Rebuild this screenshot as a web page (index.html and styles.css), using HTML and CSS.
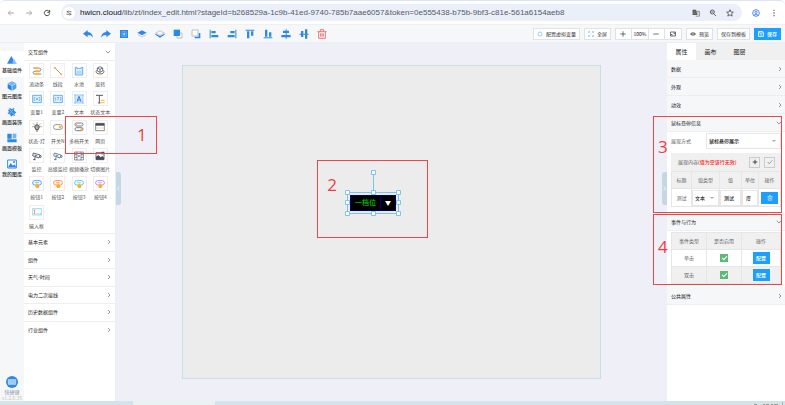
FILE: index.html
```html
<!DOCTYPE html>
<html lang="zh-CN">
<head>
<meta charset="utf-8">
<meta name="viewport" content="width=device-width, initial-scale=1">
<title>组态编辑器</title>
<link rel="stylesheet" href="styles.css">
</head>
<body>
<svg class="defs" aria-hidden="true">
  <symbol id="chev-r" viewBox="0 0 12 18"><path d="M3 3l6 6-6 6" fill="none" stroke="#666" stroke-width="2"/></symbol>
  <symbol id="chev-d" viewBox="0 0 18 12"><path d="M2 2l7 7 7-7" fill="none" stroke="#666" stroke-width="2"/></symbol>
  <symbol id="btn-shape" viewBox="0 0 30 30"><rect x="2" y="5" width="26" height="13" rx="6" fill="none" stroke="currentColor" stroke-width="3"/><path d="M9 11h12" stroke="currentColor" stroke-width="2"/><path d="M13 14q2-3 4 0v3l5 2v4l-3 4h-6l-4-6 2-2 2 2z" fill="#ffad1f"/></symbol>
  <symbol id="camera" viewBox="0 0 30 30"><path d="M4 6l20 6-3 9-19-7zM8 12l8 3M10 17l-3 9M3 26h8M24 13l4 2-3 6" fill="none" stroke="currentColor" stroke-width="2.5"/></symbol>
</svg>

<header class="browser">
  <button class="nav" aria-label="后退"><svg viewBox="0 0 24 24"><path d="M21 12H4M11 5l-7 7 7 7" fill="none" stroke="#999" stroke-width="2.5"/></svg></button>
  <button class="nav" aria-label="前进"><svg viewBox="0 0 24 24"><path d="M3 12h17M13 5l7 7-7 7" fill="none" stroke="#999" stroke-width="2.5"/></svg></button>
  <button class="nav" aria-label="刷新"><svg viewBox="0 0 24 24"><path d="M19 8a8 8 0 1 0 1 5M20 3v7h-7" fill="none" stroke="#444" stroke-width="3"/></svg></button>
  <div class="address">
    <span class="site"><svg viewBox="0 0 24 24"><path d="M3 7h5M14 7h8M2 17h9M17 17h5" stroke="#444" stroke-width="3"/><circle cx="9" cy="7" r="3" fill="none" stroke="#444" stroke-width="2.5"/><circle cx="15" cy="17" r="3" fill="none" stroke="#444" stroke-width="2.5"/></svg></span>
    <span class="url"><b>hwicn.cloud</b>/lib/zt/index_edit.html?stageId=b268529a-1c9b-41ed-9740-785b7aae6057&amp;token=0e555438-b75b-9bf3-c81e-561a6154aeb8</span>
    <button class="nav" aria-label="翻译"><svg viewBox="0 0 28 26"><path d="M2 2h12l5 18H2z" fill="#555"/><path d="M14 7h12v17H13" fill="none" stroke="#555" stroke-width="2"/><path d="M12 9a4 4 0 1 0 0 5H9M17 12h7M20 10v2c0 4-1 6-3 8M19 14l5 6" fill="none" stroke="#aaa" stroke-width="1.8"/></svg></button>
    <button class="nav" aria-label="缩放"><svg viewBox="0 0 24 24"><circle cx="10" cy="9" r="6" fill="none" stroke="#444" stroke-width="2.5"/><path d="M7 9h6M14 14l7 7" stroke="#444" stroke-width="2.5"/></svg></button>
    <button class="nav" aria-label="收藏"><svg viewBox="0 0 24 24"><path d="M12 2l3 7 7 .6-5.300 4.700 1.700 7L12 17.500 5.600 21.300l1.700-7L2 9.600 9 9z" fill="none" stroke="#444" stroke-width="2.300"/></svg></button>
  </div>
  <button class="nav" aria-label="账户"><svg viewBox="0 0 24 24"><circle cx="12" cy="12" r="10" fill="none" stroke="#3b78e0" stroke-width="2.500"/><circle cx="12" cy="10" r="3.500" fill="none" stroke="#3b78e0" stroke-width="2.500"/><path d="M5 19q7-6 14 0" fill="none" stroke="#3b78e0" stroke-width="2.500"/></svg></button>
  <button class="nav" aria-label="菜单"><svg viewBox="0 0 24 24"><g fill="#444"><circle cx="12" cy="4" r="2"/><circle cx="12" cy="12" r="2"/><circle cx="12" cy="20" r="2"/></g></svg></button>
</header>

<nav class="toolbar" aria-label="工具栏">
  <div class="tools">
    <button aria-label="撤销"><svg viewBox="0 0 30 30"><path d="M0 14L14 3v6c10 1 15 7 16 17-4-6-8-8-16-8v7z"/></svg></button>
    <button aria-label="重做"><svg viewBox="0 0 30 30"><path d="M30 14L16 3v6C6 10 1 16 0 26c4-6 8-8 16-8v7z"/></svg></button>
    <button aria-label="组合"><svg viewBox="0 0 30 30"><path d="M3 3h24v24H3z"/><path d="M9 8h13v14H9z" fill="none" stroke="#7ab8f6" stroke-width="2"/><path d="M12 15h7M15.500 11v8" fill="none" stroke="#fff" stroke-width="2"/></svg></button>
    <button aria-label="上移"><svg viewBox="0 0 30 30"><path d="M15 4l14 7-14 8L1 11z"/><path d="M2 17l13 7 13-7" fill="none" stroke="#aab4c0" stroke-width="2"/></svg></button>
    <button aria-label="下移"><svg viewBox="0 0 30 30"><path d="M15 5l13 7-13 7-13-7z" fill="none" stroke="#aab4c0" stroke-width="2"/><path d="M1 14l14 7 14-7v3l-14 9-14-9z"/></svg></button>
    <button aria-label="置顶"><svg viewBox="0 0 30 30"><path d="M12 12h15v15H12z" fill="none" stroke="#9aa6b4" stroke-width="2"/><path d="M2 2h19v19H2z"/></svg></button>
    <button aria-label="置底"><svg viewBox="0 0 30 30"><path d="M11 23v5h17V12h-5v11z"/><path d="M3 3h18v18H3z" fill="#fff" stroke="#9aa6b4" stroke-width="2"/></svg></button>
    <button aria-label="左对齐"><svg viewBox="0 0 30 30"><path d="M2 2h3v26H2zM7 6h13v7H7zM7 18h21v7H7z"/></svg></button>
    <button aria-label="右对齐"><svg viewBox="0 0 30 30"><path d="M25 2h3v26h-3zM10 6h13v7H10zM2 18h21v7H2z"/></svg></button>
    <button aria-label="上对齐"><svg viewBox="0 0 30 30"><path d="M2 2h26v3H2zM6 7h7v21H6zM18 7h7v13h-7z"/></svg></button>
    <button aria-label="下对齐"><svg viewBox="0 0 30 30"><path d="M2 25h26v3H2zM6 2h7v21H6zM18 10h7v13h-7z"/></svg></button>
    <button aria-label="水平居中"><svg viewBox="0 0 30 30"><path d="M14 1h3v28h-3zM6 5h18v7H6zM1 18h28v7H1z"/></svg></button>
    <button aria-label="垂直居中"><svg viewBox="0 0 30 30"><path d="M1 14h28v3H1zM6 6h7v18H6zM18 1h7v28h-7z"/></svg></button>
    <button aria-label="删除"><svg viewBox="0 0 30 30"><path d="M1 8h28M10 7V2h10v5M5 9v19h20V9M11 13v10M15 13v10M19 13v10" fill="none" stroke="#ec5b5b" stroke-width="2.500"/></svg></button>
  </div>
  <div class="actions">
    <button class="btn"><svg viewBox="0 0 24 24"><circle cx="12" cy="12" r="8" fill="none" stroke="#9cc8f7" stroke-width="4"/></svg>配置虚拟变量</button>
    <button class="btn"><svg viewBox="0 0 24 24"><path d="M2 8V2h6M16 2h6v6M22 16v6h-6M8 22H2v-6M5 5l4 4M19 5l-4 4M19 19l-4-4M5 19l4-4" fill="none" stroke="#56a9f5" stroke-width="2"/></svg>全屏</button>
    <div class="zoom">
      <button aria-label="放大"><svg viewBox="0 0 24 24"><path d="M1 12h22M12 1v22" stroke="#444" stroke-width="3"/></svg></button>
      <output>100%</output>
      <button aria-label="缩小"><svg viewBox="0 0 24 24"><path d="M1 12h22" stroke="#444" stroke-width="3"/></svg></button>
      <button aria-label="适应画布"><svg viewBox="0 0 24 24"><path d="M2 4h20v16H2zM13 8h5v5M11 16H6v-4" fill="none" stroke="#444" stroke-width="3"/></svg></button>
    </div>
    <button class="btn"><svg viewBox="0 0 24 24"><path d="M0 12Q12-2 24 12 12 26 0 12z" fill="#555"/><circle cx="12" cy="12" r="4" fill="none" stroke="#fff" stroke-width="2"/></svg>预览</button>
    <button class="btn">保存到模板</button>
    <button class="btn primary"><svg viewBox="0 0 24 24"><path d="M2 2h17l3 3v17H2zM7 2v7h10V2M6 16h12" fill="none" stroke="#fff" stroke-width="3"/></svg>保存</button>
  </div>
</nav>

<div class="workspace">
  <nav class="rail" aria-label="素材分类">
    <div class="rail-list">
      <a class="active" href="#"><svg viewBox="0 0 30 30"><path d="M13 3l13 23H0z" fill="#2f88e8"/><path d="M20 10l10 16H16z" fill="#8ec1f7"/></svg>基础组件</a>
      <a href="#"><svg viewBox="0 0 30 30"><path d="M15 1l13 6-13 7L2 7z" fill="#77b5f5"/><path d="M2 8l12 7v14L2 22z" fill="#2583e8"/><path d="M28 8l-12 7v14l12-7z" fill="#4b9ef0"/></svg>图元图库</a>
      <a href="#"><svg viewBox="0 0 30 30"><path d="M7 2l7 4 8-3-1 8 7 5-6 5 2 6-7-2-5 4-3-7-7-2 4-6-4-6h6z" fill="#3388e8"/><path d="M6 5l17 19M20 5L7 22" stroke="#9ccaf9" stroke-width="2"/></svg>画面装饰</a>
      <a href="#"><svg viewBox="0 0 30 30"><path d="M1 2h13v15H1zM1 19h28v9H1z" fill="#2f88e8"/><path d="M17 2h11v14H17z" fill="#73b4f6"/></svg>画面模板</a>
      <a href="#"><svg viewBox="0 0 30 30"><path d="M2 3h26v24H2z" fill="#fff" stroke="#2f88e8" stroke-width="3"/><path d="M3 25l8-13 7 8 4-4 6 9z" fill="#2f88e8"/><circle cx="21" cy="9" r="3" fill="#2f88e8"/></svg>我的图库</a>
    </div>
    <div class="shortcut">
      <button aria-label="快捷键"><svg viewBox="0 0 36 36"><circle cx="18" cy="18" r="18" fill="#2f88e8"/><path d="M7 11h22v14H7z" fill="#8ec1f7" stroke="#fff" stroke-width="1.500"/><path d="M10 15h16M10 19h16M13 22h10" stroke="#fff" stroke-dasharray="2 1"/></svg></button>
      <span>快捷键</span>
      <small>v1.2.6.35</small>
    </div>
  </nav>

  <aside class="library">
    <button class="row head">交互组件<svg class="down"><use href="#chev-d"/></svg></button>
    <div class="grid">
      <button><i><svg viewBox="0 0 30 30"><path d="M3 6h17q7 0 7 5t-7 5H9q-6 0-6 4t6 4h19" fill="none" stroke="#555b6b" stroke-width="2"/><path d="M6 6h13M10 15h13M8 24h15" stroke="#ffb52e" stroke-width="5"/></svg></i>流动条</button>
      <button><i><svg viewBox="0 0 30 30"><path d="M4 4l22 22" stroke="#666" stroke-width="2"/><circle cx="5" cy="5" r="3" fill="#ffb52e"/><circle cx="25" cy="25" r="3" fill="#ffb52e"/></svg></i>线段</button>
      <button><i><svg viewBox="0 0 30 30"><path d="M4 4h4v3h14V4h4v23H4z" fill="#e3f1ff" stroke="#4b9ff2" stroke-width="2.500"/><path d="M7 14h16v10H7z" fill="#b5d8fb"/></svg></i>水池</button>
      <button><i><svg viewBox="0 0 30 30"><path d="M15 2l8 4v9l-8 4-8-4V6zM7 6l8 4 8-4M15 10v9M5 13q-5 5 1 9 9 4 18 0 6-4 1-9" fill="none" stroke="#555b6b" stroke-width="2.500"/><path d="M16 21l6 4-6 3z" fill="#ffb52e"/></svg></i>旋转</button>
      <button><i><svg viewBox="0 0 30 30"><path d="M2 4h26v22H2z" fill="#e3f1ff" stroke="#4b9ff2" stroke-width="2.500"/><path d="M8 9l-2 6 2 6M22 9l2 6-2 6M11 11l8 8M19 11l-8 8" fill="none" stroke="#4b9ff2" stroke-width="2"/></svg></i>变量1</button>
      <button><i><svg viewBox="0 0 30 30"><path d="M2 4h26v22H2z" fill="#e3f1ff" stroke="#4b9ff2" stroke-width="2.500"/><path d="M8 10v10M12 10h6l-4 9M22 9l2 6-2 6" fill="none" stroke="#4b9ff2" stroke-width="2"/></svg></i>变量2</button>
      <button><i><svg viewBox="0 0 30 30"><path d="M3 3h24v24H3z" fill="#d9ebfe" stroke="#7ab8f6" stroke-width="2"/><path d="M1 1h4v4H1zM25 1h4v4h-4zM1 25h4v4H1zM25 25h4v4h-4z" fill="#8ec4f8"/><path d="M9 23l6-16 6 16M11 18h8" fill="none" stroke="#2583e8" stroke-width="3"/></svg></i>文本</button>
      <button><i><svg viewBox="0 0 30 30"><path d="M3 4h21M13 4v23M9 27h7" stroke="#555b6b" stroke-width="3"/><path d="M17 19h12M17 26h12" stroke="#ffb52e" stroke-width="3"/></svg></i>状态文本</button>
      <button><i><svg viewBox="0 0 30 30"><path d="M11 21q-4-4-3-8 2-5 7-5t7 5q1 4-3 8v2h-8zM12 27h6" fill="#8a909a" stroke="#444b58" stroke-width="2.500"/><path d="M15 1v4M4 5l3 3M26 5l-3 3M1 14h4M25 14h4" stroke="#444b58" stroke-width="2"/><path d="M15 13v8" stroke="#ffb52e" stroke-width="4"/></svg></i>状态-灯</button>
      <button><i><svg viewBox="0 0 30 30"><rect x="2" y="8" width="26" height="14" rx="6" fill="#fff" stroke="#777e8a" stroke-width="2.500"/><circle cx="21" cy="15" r="4" fill="#ffb52e"/></svg></i>开关N</button>
      <button><i><svg viewBox="0 0 30 30"><rect x="3" y="3" width="24" height="9" rx="4" fill="none" stroke="#777e8a" stroke-width="3"/><rect x="3" y="17" width="24" height="9" rx="4" fill="none" stroke="#777e8a" stroke-width="3"/><circle cx="7" cy="7" r="3" fill="#ffb52e"/><circle cx="22" cy="21" r="3" fill="#ffb52e"/></svg></i>多档开关</button>
      <button><i><svg viewBox="0 0 30 30"><path d="M2 4h26v22H2z" fill="#fff" stroke="#555b6b" stroke-width="2"/><path d="M2 4h26v7H2z" fill="#444b58"/><path d="M7 18h3M14 18h3M21 18h3" stroke="#ffb52e" stroke-width="3"/></svg></i>网页</button>
      <button class="slate"><i><svg><use href="#camera"/></svg></i>监控</button>
      <button class="steel"><i><svg><use href="#camera"/></svg></i>高级监控</button>
      <button><i><svg viewBox="0 0 30 30"><path d="M2 3h26v24H2zM9 3v24M21 3v24M2 11h7M2 19h7M21 11h7M21 19h7" fill="none" stroke="#555b6b" stroke-width="2"/><path d="M13 11l6 4-6 4z" fill="#2583e8"/></svg></i>视频播放</button>
      <button><i><svg viewBox="0 0 30 30"><path d="M3 5h24v21H3z" fill="#fff" stroke="#444b58" stroke-width="2.500"/><path d="M3 26v-8l7-6 7 7 5-4 5 5v6z" fill="#444b58"/><path d="M19 2h9v8l-4-2-3 3-3-3 3-3z" fill="#444b58"/></svg></i>切换图片</button>
      <button class="blue"><i><svg><use href="#btn-shape"/></svg></i>按钮1</button>
      <button class="orange"><i><svg><use href="#btn-shape"/></svg></i>按钮2</button>
      <button class="cyan"><i><svg><use href="#btn-shape"/></svg></i>按钮3</button>
      <button class="violet"><i><svg><use href="#btn-shape"/></svg></i>按钮4</button>
      <button><i><svg viewBox="0 0 30 30"><path d="M1 5h28v19H1z" fill="#fff" stroke="#63c8ea" stroke-width="2"/><path d="M5 9h5M7.500 9v11M5 20h5" stroke="#f06060" stroke-width="2"/><path d="M14 20h3M19 20h3M24 20h3" stroke="#4b9ff2" stroke-width="2"/></svg></i>输入框</button>
    </div>
    <div class="groups">
      <button class="row">基本元素<svg><use href="#chev-r"/></svg></button>
      <button class="row">组件<svg><use href="#chev-r"/></svg></button>
      <button class="row">天气-时间<svg><use href="#chev-r"/></svg></button>
      <button class="row">电力二次接线<svg><use href="#chev-r"/></svg></button>
      <button class="row">历史数据组件<svg><use href="#chev-r"/></svg></button>
      <button class="row">行业组件<svg><use href="#chev-r"/></svg></button>
    </div>
    <div class="mark mark-1">1</div>
  </aside>

  <main class="stage">
    <button class="fold fold-left" aria-label="收起左侧"><svg viewBox="0 0 12 18"><path d="M8 4L3 9l5 5" fill="none" stroke="#fff" stroke-width="2"/></svg></button>
    <div class="board">
      <div class="selection">
        <div class="device"><span>一档位</span><span class="caret">▼</span></div>
        <svg class="handles" viewBox="0 0 56 46"><g fill="none" stroke="#7cc4ee"><path d="M2.500 22.500h51v21h-51zM28.500 4v18"/><g fill="#fff"><path d="M26.500.500h4v4h-4zM.500 20.500h4v4h-4zM26.500 20.500h4v4h-4zM51.500 20.500h4v4h-4zM.500 30.500h4v4h-4zM51.500 30.500h4v4h-4zM.500 41.500h4v4h-4zM26.500 41.500h4v4h-4zM51.500 41.500h4v4h-4z"/></g></g></svg>
      </div>
      <div class="mark mark-2">2</div>
    </div>
    <button class="fold fold-right" aria-label="收起右侧"><svg viewBox="0 0 12 18"><path d="M4 4l5 5-5 5" fill="none" stroke="#fff" stroke-width="2"/></svg></button>
  </main>

  <aside class="props">
    <div class="tabs" role="tablist">
      <button role="tab" aria-selected="true">属性</button>
      <button role="tab" aria-selected="false">画布</button>
      <button role="tab" aria-selected="false">图层</button>
    </div>
    <button class="row">数据<svg><use href="#chev-r"/></svg></button>
    <button class="row">外观<svg><use href="#chev-r"/></svg></button>
    <button class="row">动效<svg><use href="#chev-r"/></svg></button>
    <section class="hover-info">
      <button class="row">鼠标悬停信息<svg class="down"><use href="#chev-d"/></svg></button>
      <div class="field">
        <label for="mode">展现方式</label>
        <div class="pick"><select id="mode"><option>鼠标悬停展示</option></select></div>
      </div>
      <div class="content-bar">
        <span>展现内容<em>(值为空该行无效)</em></span>
        <button aria-label="添加"><svg viewBox="0 0 24 24"><path d="M3 12h18M12 3v18" stroke="#444" stroke-width="4"/></svg></button>
        <button aria-label="确认"><svg viewBox="0 0 24 24"><path d="M3 12l6 7L21 5" fill="none" stroke="#777" stroke-width="2.500"/></svg></button>
      </div>
      <table class="tips">
        <thead><tr><th>标题</th><th>值类型</th><th>值</th><th>单位</th><th>操作</th></tr></thead>
        <tbody><tr>
          <td>测试</td>
          <td><div class="pick"><select aria-label="值类型"><option>文本</option></select></div></td>
          <td><input aria-label="值" value="测试"></td>
          <td><input aria-label="单位" value="度"></td>
          <td><button class="cta" aria-label="删除"><svg viewBox="0 0 24 24"><path d="M2 6h20M5 6v15h14V6M8 2h8M10 10v7M14 10v7" fill="none" stroke="#fff" stroke-width="2"/></svg></button></td>
        </tr></tbody>
      </table>
      <div class="mark mark-3">3</div>
    </section>
    <section class="events">
      <button class="row">事件与行为<svg class="down"><use href="#chev-d"/></svg></button>
      <table>
        <thead><tr><th>事件类型</th><th>是否启用</th><th>操作</th></tr></thead>
        <tbody>
          <tr><td>单击</td><td><input type="checkbox" aria-label="启用单击" checked></td><td><button class="cta">配置</button></td></tr>
          <tr><td>双击</td><td><input type="checkbox" aria-label="启用双击" checked></td><td><button class="cta">配置</button></td></tr>
        </tbody>
      </table>
      <div class="mark mark-4">4</div>
    </section>
    <button class="row">公共属性<svg><use href="#chev-r"/></svg></button>
  </aside>
</div>

<footer class="taskbar"><span></span><svg viewBox="0 0 30 3"><path d="M1 2.500h3M10 2.500h2M13 2.500h3M18 2.500h2M21 2.500h4" stroke="#999" stroke-width="1"/><path d="M29.500 0v3" stroke="#a5b8c2"/></svg></footer>
</body>
</html>
```

FILE: styles.css
```css
*, *::before, *::after { box-sizing: border-box; }
body {
  margin: 0;
  height: 100vh;
  display: flex;
  flex-direction: column;
  overflow: hidden;
  font: 5px/8px "Noto Sans CJK SC", sans-serif;
  color: #333;
  background: #fff;
}
button, input, select {
  font: inherit;
  color: inherit;
  margin: 0;
  padding: 0;
  border: 0;
  background: none;
  border-radius: 0;
}
a { color: inherit; text-decoration: none; }
svg { display: block; flex: none; }
.defs { position: absolute; width: 0; height: 0; }

/* browser bar */
.browser {
  flex: none;
  height: 24px;
  display: flex;
  align-items: center;
  gap: 10px;
  padding: 0 7px;
  border-top: 1px solid #dde6f8;
  border-radius: 5px 5px 0 0;
}
.nav svg { width: 8px; height: 8px; }
.address {
  flex: 1;
  height: 17px;
  display: flex;
  align-items: center;
  gap: 9px;
  padding: 0 8px 0 2px;
  border-radius: 9px;
  background: #ebeffa;
}
.site {
  width: 12px;
  height: 12px;
  padding: 3px;
  border-radius: 50%;
  background: #fff;
}
.site svg { width: 6px; height: 6px; }
.url {
  flex: 1;
  margin-left: -4px;
  font: 8px/12px "Liberation Sans", sans-serif;
  color: #555a62;
  white-space: nowrap;
}
.url b { font-weight: 400; color: #111; }

/* toolbar */
.toolbar {
  flex: none;
  height: 19px;
  display: flex;
  align-items: center;
  justify-content: space-between;
  padding: 0 4px 0 83px;
  background: #f5f7f9;
  border-top: 1px solid #eef0f2;
  border-bottom: 1px solid #ebeff3;
}
.tools { display: flex; gap: 8px; }
.tools svg { width: 10px; height: 10px; fill: #2f88e8; }
.actions { display: flex; gap: 4px; }
.btn {
  height: 12px;
  display: flex;
  align-items: center;
  gap: 3px;
  padding: 0 3px;
  border: 1px solid #dfe2e6;
  background: #fff;
  white-space: nowrap;
}
.btn svg { width: 6px; height: 6px; }
.btn.primary { background: #1e9fff; border-color: #1e9fff; color: #fff; font-weight: 500; }
.zoom {
  height: 12px;
  display: flex;
  border: 1px solid #dfe2e6;
  background: #fff;
}
.zoom > * {
  display: grid;
  place-items: center;
  width: 16px;
  border-right: 1px solid #dfe2e6;
}
.zoom > :last-child { border-right: 0; }
.zoom output { width: 17px; color: #111; }
.zoom svg { width: 6px; height: 6px; }

/* workspace */
.workspace { flex: 1; min-height: 0; display: flex; }
.rail {
  flex: none;
  width: 24px;
  display: flex;
  flex-direction: column;
  justify-content: space-between;
  padding: 8px 0 0;
  background: #f5f7f9;
}
.rail-list a {
  height: 26px;
  display: flex;
  flex-direction: column;
  align-items: center;
  justify-content: center;
  gap: 1px;
  font-weight: 500;
  white-space: nowrap;
}
.rail-list a.active { background: #fff; }
.rail-list svg { width: 10px; height: 10px; }
.shortcut {
  display: flex;
  flex-direction: column;
  align-items: center;
  color: #8a93a0;
  line-height: 6px;
}
.shortcut svg { width: 12px; height: 12px; }
.shortcut span { margin-top: 1px; }
.shortcut small { font-size: 5px; color: #c9c7b4; }

.library {
  position: relative;
  flex: none;
  width: 92px;
  border-right: 1px solid #eceef4;
  background: #fff;
}
.row {
  width: 100%;
  display: flex;
  align-items: center;
  justify-content: space-between;
  padding: 0 4px;
  text-align: left;
  color: #222;
}
.row svg { width: 4px; height: 6px; }
.row svg.down { width: 6px; height: 4px; }
.head { height: 18px; border-bottom: 1px solid #eee; }
.grid {
  height: 172px;
  display: grid;
  grid-template-columns: repeat(4, 1fr);
  grid-auto-rows: 1fr;
  padding: 2px 4px 0 2px;
}
.grid button {
  display: flex;
  flex-direction: column;
  align-items: center;
  gap: 2px;
  white-space: nowrap;
  color: #555;
}
.grid i {
  display: grid;
  place-items: center;
  width: 15px;
  height: 15px;
  border: 1px solid #eee;
}
.grid svg { width: 10px; height: 10px; }
.slate { --tone: #444b58; }
.steel { --tone: #4c6a8c; }
.blue { --tone: #4b9ff2; }
.orange { --tone: #ff8a50; }
.cyan { --tone: #59c6e6; }
.violet { --tone: #b88be6; }
.grid use { color: var(--tone); }
.groups { height: 105px; display: grid; grid-auto-rows: 1fr; }
.groups .row { border-top: 1px solid #eee; }

/* canvas */
.stage {
  position: relative;
  flex: 1;
  min-width: 0;
  display: flex;
  align-items: center;
  justify-content: center;
  background: #efeff8;
}
.board {
  position: relative;
  width: 76%;
  aspect-ratio: 4 / 3;
  border: 1px solid #c9dfe7;
  background: #ececec;
}
.fold {
  position: absolute;
  top: 129px;
  width: 5px;
  height: 33px;
  background: #c5d6e4;
}
.fold svg { width: 5px; height: 7px; }
.fold-left { left: 0; border-radius: 0 3px 3px 0; }
.fold-right { right: 0; border-radius: 3px 0 0 3px; }
.selection { position: absolute; left: 162px; top: 104px; width: 56px; height: 46px; }
.handles { position: absolute; inset: 0; width: 56px; height: 46px; }
.device {
  position: absolute;
  left: 5px;
  top: 25px;
  width: 46px;
  height: 16px;
  display: flex;
  border: 1px solid #000080;
  background: #000;
  color: #00e000;
  font-size: 7px;
  line-height: 13px;
}
.device span { flex: 2; text-align: center; white-space: nowrap; }
.device .caret { flex: 1; color: #fff; border-left: 1px solid #000090; font-size: 6px; }

/* callout frames */
.mark {
  position: absolute;
  z-index: 2;
  border: 1px solid #ea4848;
  color: #ea4040;
  font: 17px/20px "Open Sans", sans-serif;
  pointer-events: none;
}
.mark-1 { left: 41px; top: 73px; width: 92px; height: 38px; padding: 8px 0 0 71px; }
.mark-2 { left: 134px; top: 94px; width: 111px; height: 78px; padding: 14px 0 0 9px; }
.mark-3 { left: -14px; right: 3px; top: 2px; bottom: 0; padding: 20px 0 0 4px; }
.mark-4 { left: -14px; right: 3px; top: 1px; bottom: 2px; padding: 22px 0 0 4px; }

/* properties */
.props { flex: none; width: 118px; background: #fff; }
.tabs { display: flex; height: 17px; background: #f0f0f0; }
.tabs button { width: 29px; font-size: 6px; color: #222; }
.tabs [aria-selected="true"] { background: #fff; }
.props .row {
  height: 18px;
  padding: 0 3px 0 4px;
  background: #f5f7f9;
  border-bottom: 1px solid #eceef0;
}
.hover-info, .events { position: relative; }
.hover-info { padding-bottom: 6px; }
.events { padding-bottom: 3px; }
.field {
  display: flex;
  align-items: center;
  justify-content: space-between;
  padding: 1px 4px 4px;
  color: #666;
}
.field .pick { width: 75px; }
.pick { position: relative; color: #222; }
.pick::after {
  content: "";
  position: absolute;
  right: 5px;
  top: 7px;
  border: 2px solid transparent;
  border-top-color: #aaa;
}
.pick select {
  appearance: none;
  display: block;
  width: 100%;
  height: 16px;
  padding: 0 2px;
  border: 1px solid #e6e6e6;
  background: #fff;
  font-weight: 500;
}
.content-bar {
  height: 18px;
  margin: 0 4px;
  display: flex;
  align-items: center;
  gap: 4px;
  padding: 0 6px 0 7px;
  background: #f0f0f0;
  color: #666;
}
.content-bar span { flex: 1; white-space: nowrap; }
.content-bar em { font-style: normal; color: #f22; font-weight: 500; }
.content-bar button {
  display: grid;
  place-items: center;
  width: 11px;
  height: 11px;
  border: 1px solid #ccc;
}
.content-bar svg { width: 6px; height: 6px; }
table {
  width: calc(100% - 8px);
  margin: 0 4px;
  border-collapse: collapse;
  text-align: center;
  color: #666;
}
th, td { height: 17px; padding: 0; border: 1px solid #e6e6e6; font-weight: 400; white-space: nowrap; }
th { background: #f0f0f0; }
.tips { table-layout: fixed; }
.tips td { height: 18px; }
.tips th:nth-child(1) { width: 20px; }
.tips th:nth-child(2) { width: 28px; }
.tips th:nth-child(4) { width: 17px; }
.tips th:nth-child(5) { width: 22px; }
.tips input {
  display: block;
  width: 100%;
  height: 16px;
  padding: 0 3px;
  border: 1px solid #e6e6e6;
  color: #222;
  font-weight: 500;
}
.tips .pick { width: 100%; }
.cta {
  display: inline-grid;
  place-items: center;
  width: 17px;
  height: 12px;
  background: #1e9fff;
  color: #fff;
  font-weight: 500;
  vertical-align: middle;
}
.cta svg { width: 6px; height: 6px; }
.events table { margin-top: 1px; }
.events tr:nth-child(2) td { background: #f0f0f0; }
.events th:nth-child(-n+2) { width: 35px; }
input[type="checkbox"] {
  appearance: none;
  display: inline-flex;
  justify-content: center;
  padding-top: 2px;
  width: 8px;
  height: 8px;
  background: #5fb878;
  vertical-align: middle;
}
input[type="checkbox"]:checked::after {
  content: "";
  width: 5px;
  height: 3px;
  border: solid #fff;
  border-width: 0 0 1px 1px;
  transform: rotate(-45deg);
}

.taskbar {
  flex: none;
  height: 4px;
  display: flex;
  justify-content: space-between;
  align-items: flex-end;
  padding: 0 2px 0 17%;
  background: #d3e3ea;
}
.taskbar span { width: 82px; height: 4px; background: #eaf2f4; }
.taskbar svg { width: 30px; height: 3px; }
```
